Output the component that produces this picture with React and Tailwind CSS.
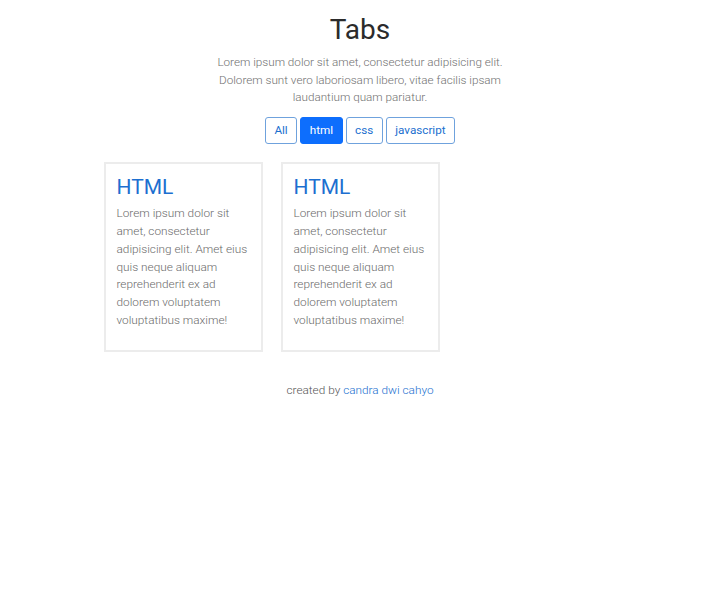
import { useState } from "react";

const tabs = ["All", "html", "css", "javascript"];

const cards = [
  { id: 1, cat: "html", title: "HTML" },
  { id: 2, cat: "html", title: "HTML" },
];

const body =
  "Lorem ipsum dolor sit amet, consectetur adipisicing elit. Amet eius quis neque aliquam reprehenderit ex ad dolorem voluptatem voluptatibus maxime!";

export default function App() {
  const [active, setActive] = useState("html");

  return (
    <div
      className="min-h-screen w-full bg-white font-light text-[#6b6b6b]"
      style={{ fontFamily: "Roboto, 'Liberation Sans', sans-serif" }}
    >
      <div className="mx-auto flex w-[513px] flex-col items-center pt-[12px]">
        <h1 className="text-[28px] font-normal leading-[36px] text-[#2b2b2b]">Tabs</h1>
        <p className="mt-[6px] w-[300px] text-center text-[11.7px] leading-[17.7px] text-[#707070]">
          Lorem ipsum dolor sit amet, consectetur adipisicing elit. Dolorem sunt vero laboriosam
          libero, vitae facilis ipsam laudantium quam pariatur.
        </p>

        {/* tab buttons */}
        <div className="mt-[10px] flex gap-[3px]">
          {tabs.map((t) => (
            <button
              key={t}
              onClick={() => setActive(t)}
              className={`h-[27px] rounded-[3px] border px-[8.5px] text-[11.7px] font-normal leading-none ${
                active === t
                  ? "border-[#0d6efd] bg-[#0d6efd] text-white"
                  : "border-[#6fa2dd] bg-white text-[#1b6fcf]"
              }`}
            >
              {t}
            </button>
          ))}
        </div>

        {/* cards */}
        <div className="mt-[18px] grid w-full grid-cols-3 gap-[18px]">
          {cards
            .filter((c) => active === "All" || c.cat === active)
            .map((c) => (
              <div key={c.id} className="h-[190px] border-2 border-[#ececec] px-[11px] pt-[9px]">
                <h3 className="text-[21px] font-normal leading-[28px] text-[#1d6fd0]">{c.title}</h3>
                <p className="mt-[4px] text-[11.8px] leading-[17.8px] text-[#6b6b6b]">{body}</p>
              </div>
            ))}
        </div>

        <p className="mt-[29px] text-[11.8px] leading-[18px] text-[#555]">
          created by <a className="text-[#1b6fcf]">candra dwi cahyo</a>
        </p>
      </div>
    </div>
  );
}
